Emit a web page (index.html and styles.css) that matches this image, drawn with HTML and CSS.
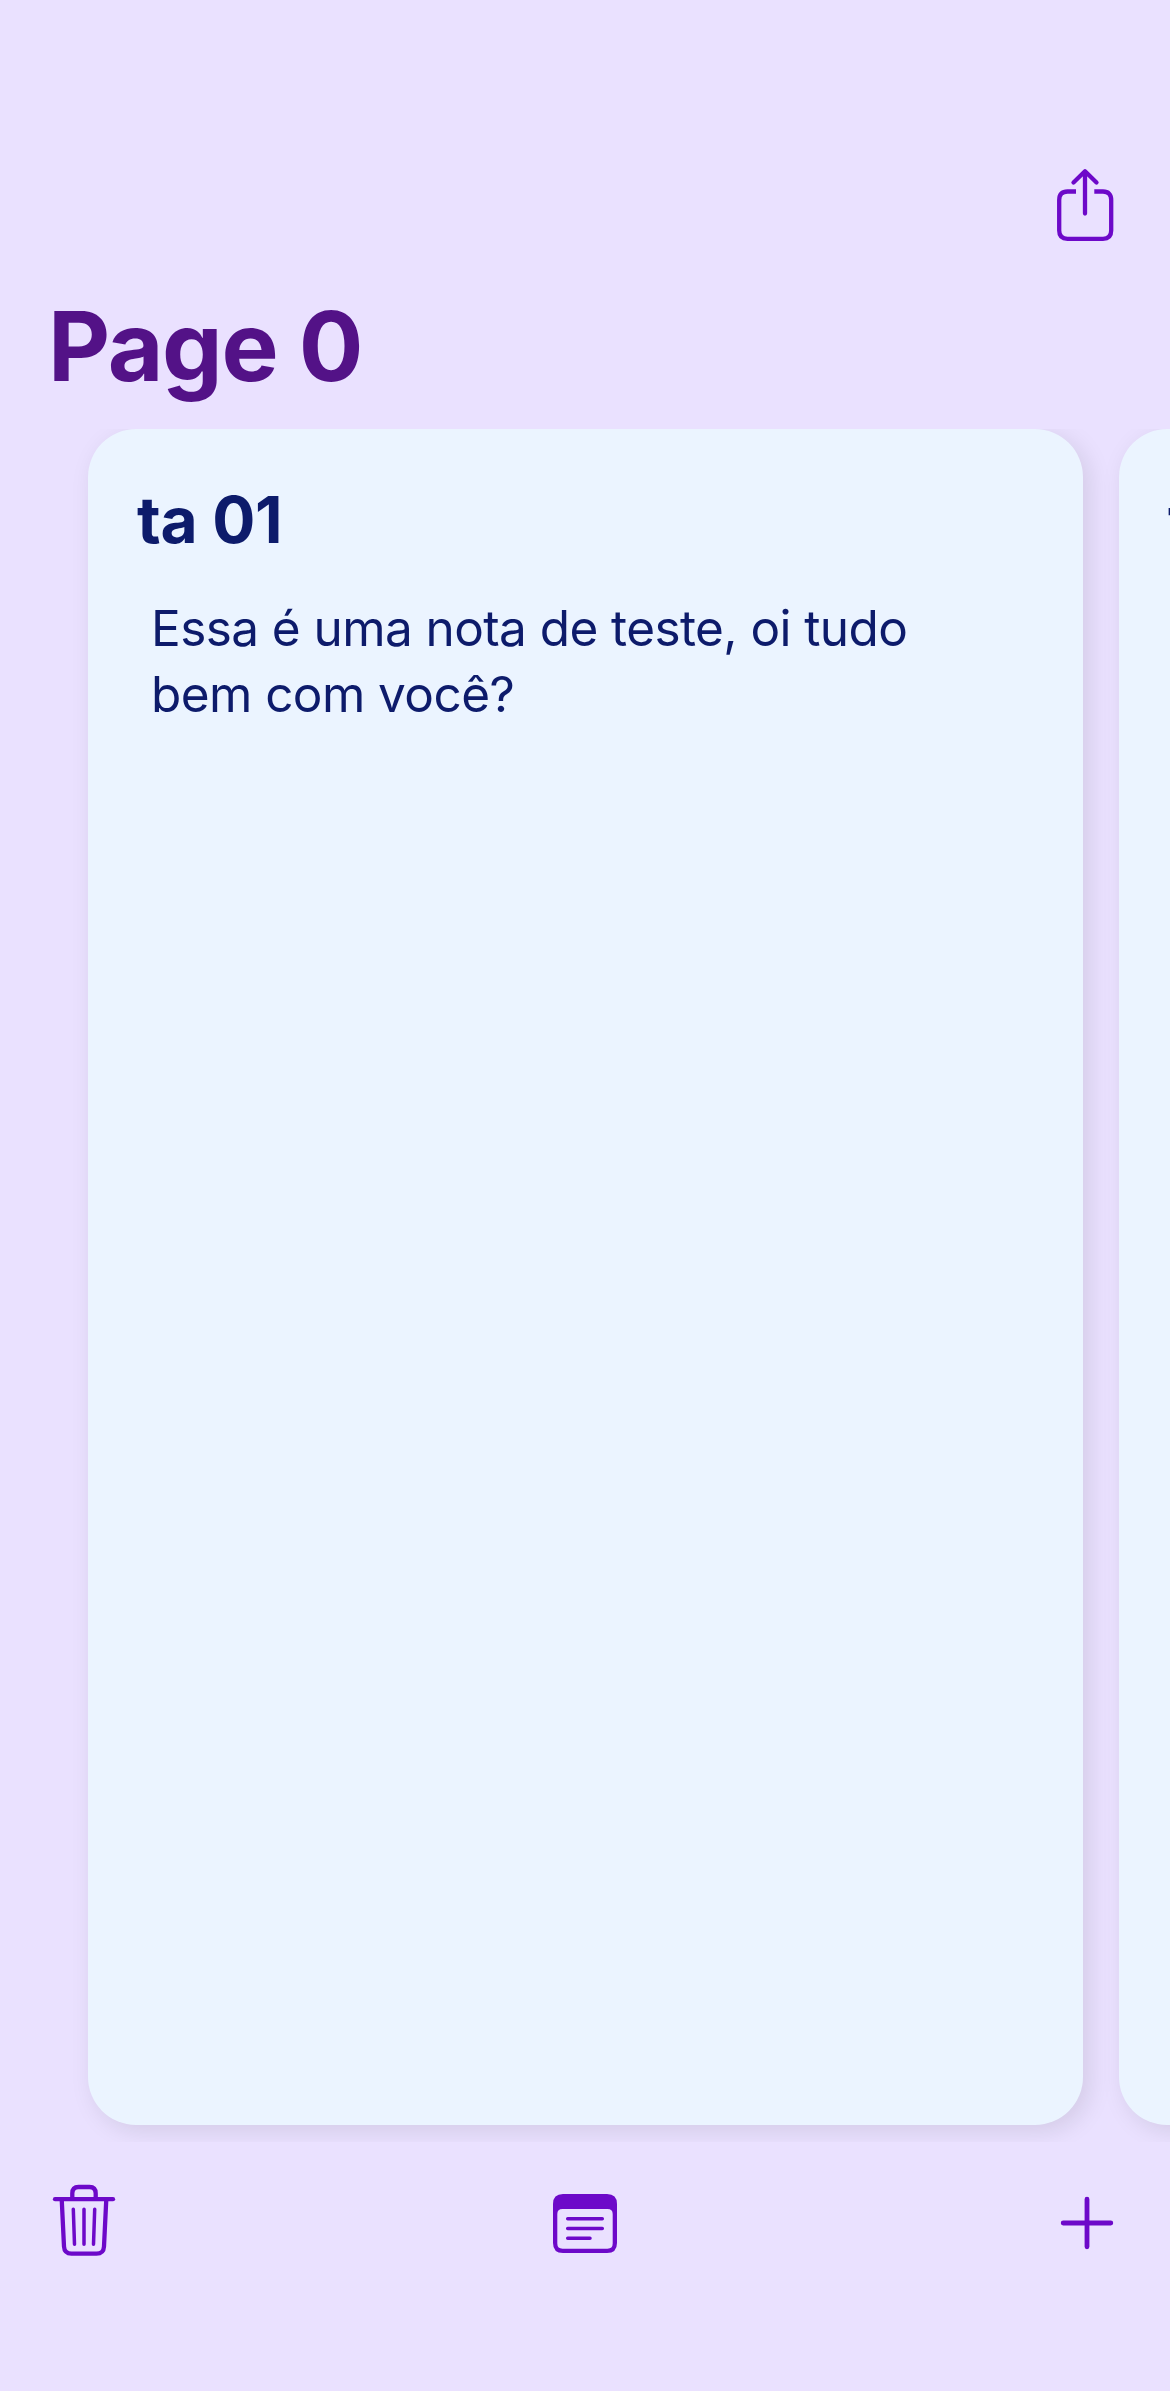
FILE: index.html
```html
<!DOCTYPE html>
<html lang="pt-BR">
<head>
<meta charset="utf-8">
<title>Page 0</title>
<link rel="stylesheet" href="styles.css">
</head>
<body>
<div class="screen">
  <header class="navbar">
    <svg class="icon" width="60" height="76" viewBox="0 0 60 76" aria-label="Share">
      <path d="M21 23.500H12.500Q4.200 23.500 4.200 32V62.500Q4.200 70.800 12.500 70.800H48Q56.200 70.800 56.200 62.500V32Q56.200 23.500 48 23.500H39.300"/>
      <path class="round" d="M30 45.500V3.500M18.500 14.500L30 3.200L41.500 14.500"/>
    </svg>
  </header>
  <h1 class="page-title">Page 0</h1>
  <main class="notes">
    <article class="note">
      <h2 class="note-title">ta 01</h2>
      <p class="note-body">Essa é uma nota de teste, oi tudo<br>bem com você?</p>
    </article>
    <article class="note">
      <h2 class="note-title">ta 02</h2>
    </article>
  </main>
  <footer class="toolbar">
    <svg class="icon" width="64" height="78" viewBox="0 0 64 78" aria-label="Delete">
      <path class="round" d="M3 15.200H61"/>
      <path d="M20.300 15V9.500Q20.300 3 26.500 3H37.500Q43.700 3 43.700 9.500V15M9.700 15L12 62.500Q12.400 69.700 19.500 69.700H44.500Q51.600 69.700 52 62.500L54.300 15"/>
      <path class="round thin" d="M21.300 25.300L22.500 60.300M32 25.300V60.300M42.700 25.300L41.500 60.300"/>
    </svg>
    <svg class="icon" width="64" height="59" viewBox="0 0 64 59" aria-label="Notes">
      <path class="solid" fill-rule="evenodd" d="M10 0H54Q64 0 64 10V49Q64 59 54 59H10Q0 59 0 49V10Q0 0 10 0ZM9.500 15Q4.300 15 4.300 20V49.500Q4.300 54.700 9.500 54.700H54.500Q59.700 54.700 59.700 49.500V20Q59.700 15 54.500 15Z"/>
      <path class="round thin" d="M14.700 24.700H49.300M14.700 34.500H49.300M14.700 44.300H37"/>
    </svg>
    <svg class="icon" width="54" height="54" viewBox="0 0 54 54" aria-label="Add">
      <path class="round plus" d="M27 3.200V50.800M3.200 27H50.800"/>
    </svg>
  </footer>
</div>
</body>
</html>
```
FILE: styles.css
```css
body {
  margin: 0;
  background: #eae1ff;
  font-family: Inter, "Liberation Sans", sans-serif;
}

.screen {
  display: flex;
  flex-direction: column;
  height: 2391px;
  overflow: hidden;
}

.navbar {
  display: flex;
  justify-content: flex-end;
  box-sizing: border-box;
  height: 288px;
  padding: 168px 55px 0 0;
}

.icon {
  display: block;
  fill: none;
  stroke: #6d09c9;
  stroke-width: 4.3;
}

.round {
  stroke-linecap: round;
  stroke-linejoin: round;
}

.thin {
  stroke-width: 3.5;
}

.plus {
  stroke-width: 4.8;
}

.solid {
  fill: #6d09c9;
  stroke: none;
}

.page-title {
  height: 141px;
  margin: 0;
  padding-left: 48px;
  box-sizing: border-box;
  color: #531287;
  font-size: 96px;
  font-weight: 700;
  line-height: 116px;
  letter-spacing: -1.3px;
}

.notes {
  display: flex;
  gap: 36px;
  box-sizing: border-box;
  height: 1713px;
  padding: 0 0 17px 88px;
  overflow: hidden;
}

.note {
  flex: 0 0 995px;
  box-sizing: border-box;
  padding: 51px 48px;
  border-radius: 48px;
  background: #ebf4ff;
  box-shadow: 6px 6px 24px rgba(0, 0, 0, 0.1);
  color: #0d1b6b;
}

.note-title {
  margin: 0;
  padding-left: 1px;
  font-size: 64px;
  font-weight: 700;
  line-height: 80px;
  letter-spacing: -0.3px;
}

.note-body {
  margin: 35px 0 0 15px;
  font-size: 49.5px;
  line-height: 66px;
  letter-spacing: -0.58px;
}

.toolbar {
  display: grid;
  grid-template-columns: 1fr auto 1fr;
  align-items: center;
  height: 162px;
  padding: 0 56px 0 52px;
}

.toolbar .icon:nth-child(2) {
  margin: 1px 0 0 4px;
}

.toolbar .icon:last-child {
  justify-self: end;
}
```
